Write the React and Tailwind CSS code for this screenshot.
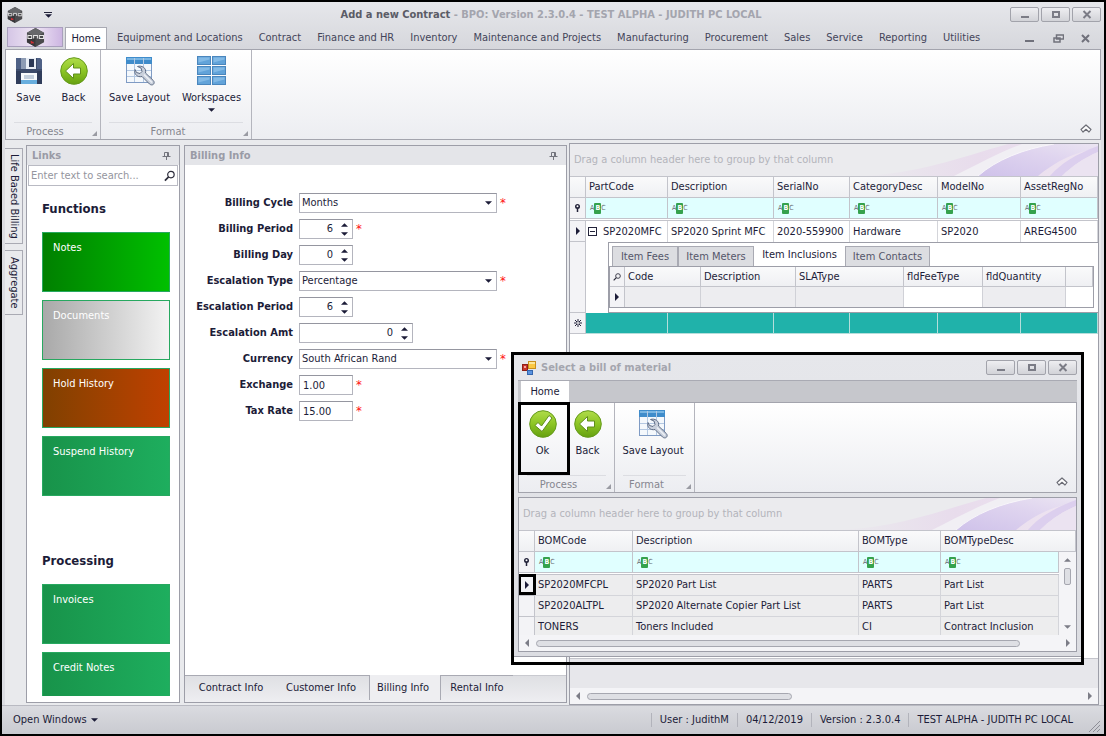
import React, { useState } from 'react';

const MENU = [
  'Equipment and Locations',
  'Contract',
  'Finance and HR',
  'Inventory',
  'Maintenance and Projects',
  'Manufacturing',
  'Procurement',
  'Sales',
  'Service',
  'Reporting',
  'Utilities',
];

const GREEN = 'bg-linear-to-r from-[#18934a] to-[#1eae5e]';

const FUNCTIONS = [
  { label: 'Notes', fill: 'bg-linear-to-r from-[#008000] to-[#00c000]' },
  { label: 'Documents', fill: 'bg-linear-to-r from-[#a9a9a9] to-[#f3f3f3]' },
  { label: 'Hold History', fill: 'bg-linear-to-r from-[#804000] to-[#c04000]' },
  { label: 'Suspend History', fill: GREEN },
];

const PROCESSING = [
  { label: 'Invoices', fill: GREEN },
  { label: 'Credit Notes', fill: GREEN },
];

const FIELDS = [
  { id: 'cycle', label: 'Billing Cycle', type: 'select', value: 'Months', required: true },
  { id: 'period', label: 'Billing Period', type: 'spin', value: '6', required: true },
  { id: 'day', label: 'Billing Day', type: 'spin', value: '0' },
  { id: 'esc-type', label: 'Escalation Type', type: 'select', value: 'Percentage', required: true },
  { id: 'esc-period', label: 'Escalation Period', type: 'spin', value: '6' },
  { id: 'esc-amt', label: 'Escalation Amt', type: 'spin', value: '0', wide: true },
  { id: 'currency', label: 'Currency', type: 'select', value: 'South African Rand', required: true },
  { id: 'exchange', label: 'Exchange', type: 'text', value: '1.00', required: true },
  { id: 'tax', label: 'Tax Rate', type: 'text', value: '15.00', required: true },
];

const ASSET_COLUMNS = ['PartCode', 'Description', 'SerialNo', 'CategoryDesc', 'ModelNo', 'AssetRegNo'];
const BOM_COLUMNS = ['BOMCode', 'Description', 'BOMType', 'BOMTypeDesc'];

const BOM_ROWS = [
  ['SP2020MFCPL', 'SP2020 Part List', 'PARTS', 'Part List'],
  ['SP2020ALTPL', 'SP2020 Alternate Copier Part List', 'PARTS', 'Part List'],
  ['TONERS', 'Toners Included', 'CI', 'Contract Inclusion'],
];

/* ---------- icons ---------- */

const Arrow = ({ dir = 'down', className = '' }) => {
  const paths = {
    down: 'M0 0h8L4 4z',
    up: 'M0 4h8L4 0z',
    left: 'M4 0v8L0 4z',
    right: 'M0 0v8l4-4z',
  };
  const tall = dir === 'left' || dir === 'right';
  return (
    <svg
      width={tall ? 4 : 7}
      height={tall ? 8 : 4}
      viewBox={tall ? '0 0 4 8' : '0 0 8 4'}
      className={`shrink-0 ${className}`}
      fill="currentColor"
      aria-hidden="true"
    >
      <path d={paths[dir]} />
    </svg>
  );
};

const HexLogo = ({ size = 16 }) => (
  <svg width={size} height={size} viewBox="0 0 20 20" aria-hidden="true">
    <path d="M10 0l9 5v10l-9 5-9-5V5z" fill="#4a4a4d" />
    <path d="M10 0l9 5-9 4-9-4z" fill="#66676a" />
    <path d="M10 11v9l-9-5V9z" fill="#38383b" />
    <path d="M1.500 8h4.500v3H2V7M8 11V8h4v3M14 8h4.500v3H14z" fill="none" stroke="#e4e4e4" strokeWidth="1.100" />
    <path d="M5 14l3 2M5 16l3-1" stroke="#d22f35" strokeWidth="1.300" />
  </svg>
);

const SaveIcon = () => (
  <svg width="28" height="28" viewBox="0 0 28 28" aria-hidden="true">
    <path d="M1 1h24l2 2v24H1z" fill="#3c4b6b" />
    <path d="M1 1h5v11H1zM22 1h3l2 2v9h-5z" fill="#4f6186" />
    <rect x="6" y="1" width="15" height="11" fill="#e9eef5" />
    <rect x="6" y="1" width="5" height="11" fill="#8e9cb4" />
    <rect x="14" y="2" width="5" height="8" fill="#2b3855" />
    <rect x="6" y="16" width="16" height="11" fill="#f7fafd" />
    <rect x="6" y="23" width="16" height="4" fill="#68aede" />
    <path d="M9 19h10M9 21h10" stroke="#8ea4be" />
    <path d="M1 14h5v13H1zM22 14h5v13h-5z" fill="#303d5b" />
  </svg>
);

const GreenDisc = ({ id, children }) => (
  <svg width="28" height="28" viewBox="0 0 28 28" aria-hidden="true">
    <defs>
      <linearGradient id={id} x1="0" y1="0" x2="0" y2="1">
        <stop offset="0" stopColor="#b0dc4a" />
        <stop offset="0.5" stopColor="#8cc524" />
        <stop offset="1" stopColor="#66a010" />
      </linearGradient>
    </defs>
    <circle cx="14" cy="14" r="13.3" fill={`url(#${id})`} stroke="#659a1c" strokeWidth="1" />
    {children}
  </svg>
);

const BackIcon = ({ id }) => (
  <GreenDisc id={id}>
    <path d="M5.500 14l8-7.500v4.500h7v6h-7v4.500z" fill="#fff" stroke="#5f8d1c" strokeWidth="1" strokeLinejoin="round" />
  </GreenDisc>
);

const OkIcon = () => (
  <GreenDisc id="disc-ok">
    <path d="M6 15.500l3-3 3.500 3.500L20 5.500l3 2.500-10 13.500z" fill="#fff" stroke="#5f8d1c" strokeWidth="1" strokeLinejoin="round" />
  </GreenDisc>
);

const LayoutIcon = () => (
  <svg width="30" height="30" viewBox="0 0 30 30" aria-hidden="true">
    <rect x="1.500" y="1.500" width="25" height="25" fill="#f4f8fc" stroke="#7f9bc4" />
    <rect x="1" y="1" width="26" height="7" fill="#3f8ccb" />
    <rect x="2" y="2" width="24" height="2" fill="#79b6e3" />
    <path d="M9.500 2v24M18.500 2v24M2 14.500h24M2 20.500h24" stroke="#b4c8e2" />
    <path
      d="M12.500 10.500l3.500 1.500 1 3.500-2 2-3.500-1-1.500-3c-1 3 .5 6 3.500 7 1.500.4 2.500.2 3.500 0l7.500 7.500c1 1 3 1.300 4 .2 1-1 .8-2.700-.2-3.700l-7.800-7.500c.6-2.500-.2-4.500-2-5.700-1.800-1.200-4-1.500-6-.8z"
      fill="#c9d0dc"
      stroke="#5f6d86"
      strokeWidth="1"
      strokeLinejoin="round"
    />
    <path d="M19 18.500l8 8" stroke="#eef1f6" strokeWidth="1.200" />
  </svg>
);

const WorkspacesIcon = () => (
  <svg width="30" height="30" viewBox="0 0 30 30" aria-hidden="true">
    {[0.5, 10.5, 20.5].map((y) =>
      [0.5, 15.5].map((x) => (
        <g key={`${x}-${y}`}>
          <rect x={x} y={y} width="13" height="8" fill="#62a3d9" stroke="#4a86bd" />
          <path d={`M${x + 1} ${y + 1}h11v2l-11 3z`} fill="#83bae6" />
        </g>
      ))
    )}
  </svg>
);

const FormIcon = () => (
  <svg width="14" height="14" viewBox="0 0 14 14" aria-hidden="true">
    <rect x="0.500" y="3.500" width="5" height="6" fill="#c9342a" stroke="#8d1f18" />
    <rect x="2" y="5" width="2" height="2" fill="#f4a79f" />
    <rect x="6.500" y="0.500" width="7" height="7" fill="#fbc843" stroke="#c98f1d" />
    <rect x="7" y="1" width="6" height="2" fill="#fde79b" />
    <rect x="5.500" y="9.500" width="5" height="4" fill="#5b93e0" stroke="#3567ae" />
  </svg>
);

const PinIcon = () => (
  <svg width="9" height="9" viewBox="0 0 9 9" stroke="#73747d" fill="none" aria-hidden="true">
    <path d="M2.500 5V1.500h4V5M5.500 1.500V5M0.500 5.500h8M4.500 5.500V9" />
  </svg>
);

const SearchIcon = ({ size = 12 }) => (
  <svg width={size} height={size} viewBox="0 0 12 12" fill="none" stroke="#2b2b3a" strokeWidth="1.300" aria-hidden="true">
    <circle cx="7.500" cy="4.500" r="3.500" />
    <path d="M5 7L1 11" strokeWidth="1.800" />
  </svg>
);

const FilterMark = () => (
  <svg width="7" height="8" viewBox="0 0 7 8" className="mx-auto" aria-hidden="true">
    <circle cx="3.500" cy="2.500" r="2.500" fill="#23233a" />
    <circle cx="3.500" cy="2.200" r="1" fill="#fff" />
    <path d="M3.500 4v4" stroke="#23233a" strokeWidth="1.500" />
  </svg>
);

const NewRowMark = () => (
  <svg width="8" height="8" viewBox="0 0 8 8" className="mx-auto" stroke="#23233a" aria-hidden="true">
    <path d="M4 0v8M0 4h8M1 1l6 6M7 1L1 7" />
    <circle cx="4" cy="4" r="1" fill="#fff" stroke="none" />
  </svg>
);

const CollapseIcon = () => (
  <svg width="12" height="9" viewBox="0 0 12 9" fill="#fff" stroke="#6c6d76" strokeWidth="1.200" strokeLinejoin="round" aria-hidden="true">
    <path d="M6 1l5 4.500-2 2.500-3-2.700L3 8 1 5.500z" />
  </svg>
);

// Lilac sweep on the right side of every group-by band
const Swoosh = ({ id }) => (
  <svg className="h-full w-[240px]" viewBox="0 0 240 32" preserveAspectRatio="none" aria-hidden="true">
    <defs>
      <linearGradient id={`${id}-a`} x1="0" y1="0" x2="1" y2="0">
        <stop offset="0" stopColor="#ebebee" />
        <stop offset="0.5" stopColor="#e8dcec" />
        <stop offset="1" stopColor="#eee4f1" />
      </linearGradient>
      <linearGradient id={`${id}-b`} x1="0" y1="1" x2="1" y2="0">
        <stop offset="0" stopColor="#cfc2ea" />
        <stop offset="0.6" stopColor="#dfd4ef" />
        <stop offset="1" stopColor="#ebe5f2" />
      </linearGradient>
    </defs>
    <path d="M0 32C60 30 100 14 150 0h90v32H0z" fill={`url(#${id}-a)`} />
    <path d="M96 32C120 20 140 9 164 0h30c-30 8-50 18-72 32z" fill="#f1eff4" />
    <path d="M120 32C138 16 165 5 196 0h44v4C210 10 195 20 180 32z" fill={`url(#${id}-b)`} />
    <path d="M192 32c10-12 26-22 48-30v6c-14 6-26 14-36 24z" fill="#dccfee" />
    <path d="M204 32c10-10 22-18 36-24v24z" fill="#ebe3f1" />
    <path d="M120 32C138 16 165 5 196 0" stroke="#f8f6fa" fill="none" />
  </svg>
);

/* ---------- shared parts ---------- */

const CaptionButton = ({ label, children }) => (
  <button
    type="button"
    aria-label={label}
    className="flex h-[15px] w-[29px] items-center justify-center rounded-xs border border-[#a2a3ab] bg-linear-to-b from-[#eeeef1] to-[#d2d3d8]"
  >
    <svg width="10" height="9" viewBox="0 0 10 9" fill="none" stroke="#7b7c86" strokeWidth="2" aria-hidden="true">
      {children}
    </svg>
  </button>
);

const CaptionButtons = () => (
  <div className="flex gap-[2px]">
    <CaptionButton label="Minimize">
      <path d="M1 7h8" />
    </CaptionButton>
    <CaptionButton label="Maximize">
      <path d="M2 2h6v5H2z" />
    </CaptionButton>
    <CaptionButton label="Close">
      <path d="M1.500 1l7 7M8.500 1l-7 7" />
    </CaptionButton>
  </div>
);

const RibbonButton = ({ icon, label, width, menu, outlined }) => (
  <button type="button" className={`relative flex h-[68px] flex-col items-center pt-1 ${width}`}>
    <span className="flex h-[34px] items-center">{icon}</span>
    <span className="mt-[3px] leading-[14px] whitespace-nowrap">{label}</span>
    {menu && <Arrow className="mt-[3px]" />}
    {outlined && <span className="absolute -top-px -left-px h-[73px] w-[52px] border-3 border-black" />}
  </button>
);

const RibbonGroup = ({ label, width, children }) => (
  <div className={`relative flex flex-col border-r border-[#b4b5bd] ${width}`}>
    <div className="flex">{children}</div>
    <div className="mx-2 mt-[4px] border-t border-[#dcdde2] pt-px pr-4 text-center leading-[16px] text-[#85868f]">{label}</div>
    <svg width="5" height="5" className="absolute right-[3px] bottom-[3px]" aria-hidden="true">
      <path d="M5 0v5H0z" fill="#9a9ba3" />
    </svg>
  </div>
);

const Ribbon = ({ children }) => (
  <div className="flex h-[91px] shrink-0 border border-[#a3a4ad] bg-linear-to-b from-white to-[#ecedf1]">
    {children}
    <button type="button" aria-label="Collapse ribbon" className="mt-auto mr-2 mb-[6px] ml-auto">
      <CollapseIcon />
    </button>
  </div>
);

const GroupBand = ({ id }) => (
  <div className="flex h-8 shrink-0 items-center justify-between bg-[#ebebee] pl-1">
    <span className="whitespace-nowrap text-[#b3b4bb]">Drag a column header here to group by that column</span>
    <Swoosh id={id} />
  </div>
);

const headCell =
  'h-[21px] border-r border-b border-[#c3c4cb] bg-linear-to-b from-[#fafafb] to-[#eff0f3] p-0 pl-[3px] text-left font-normal whitespace-nowrap';
const markCell = 'border-r border-b border-[#c3c4cb] bg-[#f3f3f6] p-0';

const FilterRow = ({ columns }) => (
  <tr className="h-[21px]">
    <td className={markCell}>
      <FilterMark />
    </td>
    {columns.map((c) => (
      <td key={c} className="border-r border-b border-[#c3c4cb] bg-[#e0ffff] p-0 pl-1">
        <button type="button" aria-label={`Filter ${c}`} className="flex h-[11px] items-center text-[7px] leading-[11px] text-[#66676f]">
          A<span className="h-[11px] w-[7px] rounded-[1px] bg-[#35a24d] text-center font-bold text-white">B</span>C
        </button>
      </td>
    ))}
  </tr>
);

const HScroll = ({ thumb }) => (
  <div className="flex h-4 shrink-0 items-center bg-[#f4f4f7] px-[6px] text-[#7c7d87]">
    <Arrow dir="left" className="mr-[7px]" />
    <div className={`h-[7px] rounded-full border border-[#a6a7b0] bg-[#dedfe4] ${thumb}`} />
    <Arrow dir="right" className="ml-auto" />
  </div>
);

const PanelTitle = ({ children }) => (
  <div className="flex h-[19px] shrink-0 items-center justify-between bg-[#e4e5e9] pr-2 pl-[5px]">
    <h2 className="font-bold text-[#9a9ba6]">{children}</h2>
    <button type="button" aria-label={`Pin ${children}`}>
      <PinIcon />
    </button>
  </div>
);

/* ---------- left panels ---------- */

const Tiles = ({ items }) => (
  <div className="flex flex-col gap-2">
    {items.map((t) => (
      <button
        key={t.label}
        type="button"
        className={`flex h-[60px] shrink-0 items-start border border-[#27a860] px-[10px] pt-2 leading-[14px] text-white ${t.fill}`}
      >
        {t.label}
      </button>
    ))}
  </div>
);

const LinksPanel = () => (
  <section className="flex w-[154px] shrink-0 flex-col border border-[#9d9ea8] bg-white">
    <PanelTitle>Links</PanelTitle>
    <div className="mx-px flex h-[21px] shrink-0 items-center border border-[#b9bac3] px-[2px]">
      <input
        type="text"
        aria-label="Search links"
        placeholder="Enter text to search..."
        className="w-full min-w-0 outline-none placeholder:text-[#94959e]"
      />
      <SearchIcon />
    </div>
    <div className="mb-[6px] min-h-0 flex-1 overflow-hidden px-[15px] pr-[9px]">
      <h3 className="mt-[15px] mb-[15px] text-[13px] leading-[16px] font-bold">Functions</h3>
      <Tiles items={FUNCTIONS} />
      <h3 className="mt-[57px] mb-[15px] text-[13px] leading-[16px] font-bold">Processing</h3>
      <Tiles items={PROCESSING} />
    </div>
  </section>
);

const box = 'h-5 border border-[#b4b5be] border-t-[#9596a0] bg-white';

const Field = ({ field }) => {
  const [value, setValue] = useState(field.value);
  const id = `field-${field.id}`;
  const step = (n) => setValue(String(Number(value) + n));

  return (
    <div className="flex h-5 items-center">
      <label htmlFor={id} className="mr-[6px] w-[108px] shrink-0 text-right font-bold whitespace-nowrap">
        {field.label}
      </label>
      {field.type === 'select' && (
        <div className="relative">
          <select id={id} className={`${box} w-[198px] appearance-none pl-[2px]`}>
            <option>{field.value}</option>
          </select>
          <Arrow className="pointer-events-none absolute top-2 right-[5px]" />
        </div>
      )}
      {field.type === 'spin' && (
        <div className={`${box} flex ${field.wide ? 'w-[114px]' : 'w-[54px]'}`}>
          <input
            id={id}
            type="text"
            value={value}
            onChange={(e) => setValue(e.target.value)}
            className="w-full min-w-0 pr-[3px] text-right outline-none"
          />
          <div className="flex w-4 shrink-0 flex-col items-center justify-center gap-[5px]">
            <button type="button" aria-label={`Increase ${field.label}`} onClick={() => step(1)}>
              <Arrow dir="up" />
            </button>
            <button type="button" aria-label={`Decrease ${field.label}`} onClick={() => step(-1)}>
              <Arrow />
            </button>
          </div>
        </div>
      )}
      {field.type === 'text' && (
        <input
          id={id}
          type="text"
          value={value}
          onChange={(e) => setValue(e.target.value)}
          className={`${box} w-[54px] pl-[3px] outline-none`}
        />
      )}
      {field.required && <span className="ml-[3px] text-[13px] leading-[14px] text-[#ff1010]">*</span>}
    </div>
  );
};

const BillingPanel = () => (
  <section className="flex w-[383px] shrink-0 flex-col border border-[#9d9ea8] bg-white">
    <PanelTitle>Billing Info</PanelTitle>
    <form className="flex flex-1 flex-col gap-[6px] pt-7">
      {FIELDS.map((f) => (
        <Field key={f.id} field={f} />
      ))}
    </form>
    <nav className="flex h-[27px] shrink-0 bg-linear-to-b from-[#dedfe3] to-[#eeeef1] pb-[2px]">
      <button type="button" className="w-[92px] border-t border-[#a9aab3]">Contract Info</button>
      <button type="button" className="w-[93px] border-t border-r border-[#a9aab3] pr-1">Customer Info</button>
      <button type="button" className="w-[71px] border-r border-[#a9aab3] bg-[#eeeef1] pr-1">Billing Info</button>
      <button type="button" className="w-[72px] border-t border-[#a9aab3]">Rental Info</button>
      <span className="flex-1 border-t border-[#c9cad0]" />
    </nav>
  </section>
);

/* ---------- asset grid ---------- */

const detailTab = 'h-5 border border-b-0 border-[#a9aab3] bg-[#dcdde1] text-[#55566a] whitespace-nowrap';

const ItemDetail = () => (
  <div className="border-t border-b border-l border-[#9d9ea8] bg-white pb-1">
    <div className="flex items-end pl-[3px]">
      <button type="button" className={`${detailTab} w-[66px]`}>Item Fees</button>
      <button type="button" className={`${detailTab} w-[76px]`}>Item Meters</button>
      <button type="button" className="h-[23px] w-[91px] bg-white whitespace-nowrap">Item Inclusions</button>
      <button type="button" className={`${detailTab} w-[85px]`}>Item Contacts</button>
    </div>
    <table className="mr-1 w-[485px] table-fixed border-separate border-spacing-0 border border-[#9d9ea8]">
      <colgroup>
        <col className="w-[15px]" />
        <col className="w-[76px]" />
        <col className="w-[95px]" />
        <col className="w-[108px]" />
        <col className="w-[79px]" />
        <col className="w-[83px]" />
        <col />
      </colgroup>
      <thead>
        <tr className="h-5">
          <th className="border-r border-b border-[#c3c4cb] bg-[#f3f3f6] p-0" aria-label="Find">
            <span className="flex justify-center">
              <SearchIcon size={8} />
            </span>
          </th>
          {['Code', 'Description', 'SLAType', 'fldFeeType', 'fldQuantity', ''].map((c) => (
            <th
              key={c}
              className="border-r border-b border-[#c3c4cb] bg-linear-to-b from-[#fafafb] to-[#eff0f3] p-0 pl-[3px] text-left font-normal"
            >
              {c}
            </th>
          ))}
        </tr>
      </thead>
      <tbody>
        <tr className="h-5">
          <td className="border-r border-[#c3c4cb] bg-[#f3f3f6] p-0">
            <Arrow dir="right" className="mx-auto" />
          </td>
          <td className="border-r border-[#d0d1d7] bg-[#ededf0]" />
          <td className="border-r border-[#d0d1d7] bg-[#ededf0]" />
          <td className="border-r border-[#d0d1d7] bg-[#ededf0]" />
          <td className="border-r border-[#d0d1d7] bg-white" />
          <td className="border-r border-[#d0d1d7] bg-[#ededf0]" />
          <td className="bg-white" />
        </tr>
      </tbody>
    </table>
  </div>
);

const dataCell = 'border-r border-[#d4d5da] p-0 pl-[3px] whitespace-nowrap';

const AssetGrid = () => (
  <section className="mr-[2px] flex min-w-0 flex-1 flex-col overflow-hidden border border-[#9d9ea8] bg-white">
    <GroupBand id="band-assets" />
    <table className="w-full table-fixed border-separate border-spacing-0 border-t border-[#c3c4cb]">
      <colgroup>
        <col className="w-4" />
        <col className="w-[82px]" />
        <col className="w-[106px]" />
        <col className="w-[76px]" />
        <col className="w-[88px]" />
        <col className="w-[83px]" />
        <col />
      </colgroup>
      <thead>
        <tr>
          <th className={headCell} aria-label="Row" />
          {ASSET_COLUMNS.map((c) => (
            <th key={c} className={headCell}>{c}</th>
          ))}
        </tr>
      </thead>
      <tbody>
        <FilterRow columns={ASSET_COLUMNS} />
        <tr className="h-[2px]">
          <td colSpan={7} className="border-b border-[#c3c4cb] p-0" />
        </tr>
        <tr className="h-[21px]">
          <td className={markCell}>
            <Arrow dir="right" className="mx-auto" />
          </td>
          <td className="border-r border-[#d4d5da] p-0">
            <span className="flex items-center gap-[6px] pl-[2px]">
              <button
                type="button"
                aria-label="Collapse row"
                className="flex size-[9px] shrink-0 items-center justify-center border border-[#23233a]"
              >
                <span className="h-px w-[5px] bg-[#23233a]" />
              </button>
              SP2020MFC
            </span>
          </td>
          <td className={dataCell}>SP2020 Sprint MFC</td>
          <td className={dataCell}>2020-559900</td>
          <td className={dataCell}>Hardware</td>
          <td className={dataCell}>SP2020</td>
          <td className={dataCell}>AREG4500</td>
        </tr>
        <tr>
          <td className={markCell} />
          <td colSpan={6} className="p-0 pl-[22px]">
            <ItemDetail />
          </td>
        </tr>
        <tr className="h-[21px]">
          <td className={markCell}>
            <NewRowMark />
          </td>
          {ASSET_COLUMNS.map((c) => (
            <td key={c} className="border-r border-b border-[#b5dedb] bg-[#20b2aa] p-0" />
          ))}
        </tr>
      </tbody>
    </table>
    <div className="flex-1" />
    <div className="h-[30px] shrink-0 border-t border-[#c3c4cb] bg-[#e7e7eb]" />
    <HScroll thumb="w-[205px]" />
  </section>
);

/* ---------- dialog ---------- */

const BomGrid = () => (
  <section className="flex min-h-0 flex-1 flex-col overflow-hidden border border-[#9d9ea8] bg-[#f4f4f7]">
    <GroupBand id="band-bom" />
    <div className="relative min-h-0 flex-1 overflow-hidden">
      <table className="w-full table-fixed border-separate border-spacing-0 border-t border-[#c3c4cb]">
        <colgroup>
          <col className="w-4" />
          <col className="w-[98px]" />
          <col className="w-[226px]" />
          <col className="w-[82px]" />
          <col />
          <col className="w-[17px]" />
        </colgroup>
        <thead>
          <tr>
            <th className={headCell} aria-label="Row" />
            {BOM_COLUMNS.map((c, i) => (
              <th key={c} colSpan={i === 3 ? 2 : 1} className={headCell}>{c}</th>
            ))}
          </tr>
        </thead>
        <tbody>
          <FilterRow columns={BOM_COLUMNS} />
          <tr className="h-[2px]">
            <td colSpan={5} className="border-b border-[#c3c4cb] bg-white p-0" />
          </tr>
          {BOM_ROWS.map((row, r) => (
            <tr key={row[0]} className="h-[21px]">
              <td className={`${markCell} relative`}>
                {r === 0 && (
                  <>
                    <Arrow dir="right" className="mx-auto" />
                    <span className="absolute -top-px -left-px h-[21px] w-[18px] border-3 border-black" />
                  </>
                )}
              </td>
              {row.map((cell, i) => (
                <td key={i} className="border-r border-b border-[#d4d5da] bg-[#ededee] p-0 pl-[3px] whitespace-nowrap">
                  {cell}
                </td>
              ))}
            </tr>
          ))}
        </tbody>
      </table>
      <div className="absolute top-[22px] right-0 bottom-0 flex w-[17px] flex-col items-center bg-[#f4f4f7] py-[6px] text-[#7c7d87]">
        <Arrow dir="up" />
        <div className="mt-[6px] h-[17px] w-[7px] rounded-xs border border-[#a6a7b0] bg-[#dedfe4]" />
        <Arrow className="mt-auto" />
      </div>
    </div>
    <HScroll thumb="w-[484px]" />
  </section>
);

const BomDialog = () => (
  <div role="dialog" aria-label="Select a bill of material" className="absolute top-[350px] left-[509px] h-[313px] w-[573px] border-3 border-black">
    <div className="flex h-[302px] flex-col border-b border-[#9d9ea8] bg-linear-to-b from-[#e6e7eb] to-[#dcdde2] px-1 pb-1">
      <div className="flex h-[25px] shrink-0 items-center gap-[5px] pl-1">
        <FormIcon />
        <h2 className="flex-1 font-bold text-[#a4a5ae]">Select a bill of material</h2>
        <CaptionButtons />
      </div>
      <div className="flex h-[22px] shrink-0 items-end border-t border-[#a9aab3] bg-[#c6c7cc] pl-[3px]">
        <button type="button" className="h-[21px] w-[48px] bg-white">Home</button>
      </div>
      <Ribbon>
        <RibbonGroup label="Process" width="w-[96px]">
          <RibbonButton icon={<OkIcon />} label="Ok" width="w-[47px]" outlined />
          <RibbonButton icon={<BackIcon id="disc-back-bom" />} label="Back" width="w-[43px]" />
        </RibbonGroup>
        <RibbonGroup label="Format" width="w-[80px]">
          <RibbonButton icon={<LayoutIcon />} label="Save Layout" width="w-[76px]" />
        </RibbonGroup>
      </Ribbon>
      <div className="h-1 shrink-0" />
      <BomGrid />
    </div>
  </div>
);

/* ---------- page ---------- */

const SideTab = ({ children, height }) => (
  <button
    type="button"
    className={`flex w-[18px] items-center justify-center border border-l-0 border-[#a9aab3] bg-[#e9eaed] whitespace-nowrap [writing-mode:vertical-rl] ${height}`}
  >
    {children}
  </button>
);

const App = () => (
  <div className="relative flex h-screen min-h-[700px] flex-col overflow-hidden border-2 border-black bg-[#dcdde2] font-['DejaVu_Sans_Condensed','Noto_Sans',sans-serif] text-[11px] leading-[14px] text-[#1c1c38]">
    <header className="shrink-0 bg-linear-to-b from-[#e6e7eb] to-[#d6d7dc] px-[3px]">
      <div className="flex h-[25px] items-center pl-[2px]">
        <HexLogo />
        <button type="button" aria-label="Customize toolbar" className="ml-[21px] flex flex-col items-center gap-px">
          <span className="h-px w-2 bg-[#23233a]" />
          <Arrow />
        </button>
        <h1 className="flex-1 pl-10 text-center font-bold whitespace-nowrap text-[#a4a5ae]">
          <span className="text-[#5b5c66]">Add a new Contract</span> - BPO: Version 2.3.0.4 - TEST ALPHA - JUDITH PC LOCAL
        </h1>
        <CaptionButtons />
      </div>
      <nav className="flex h-[22px] items-stretch pl-[2px] text-[#44455a]">
        <button
          type="button"
          aria-label="Application menu"
          className="mb-[2px] flex w-[56px] items-center justify-center border border-[#a9a0bd] bg-linear-to-r from-[#d5c6e6] via-[#efe6f4] to-[#cdb6e2]"
        >
          <HexLogo size={19} />
        </button>
        <button type="button" className="ml-[2px] w-[42px] border border-b-0 border-[#a9aab3] bg-white text-[#1c1c38]">
          Home
        </button>
        <div className="ml-[10px] flex gap-4">
          {MENU.map((m) => (
            <button key={m} type="button" className="whitespace-nowrap">{m}</button>
          ))}
        </div>
        <div className="mr-[9px] ml-auto flex items-center gap-[17px]">
          {['M0 7h9', 'M3.500 1h7v4h-7zM1 4h6v4H1z', 'M1 1l7 7M8 1L1 8'].map((d, i) => (
            <button key={d} type="button" aria-label={['Minimize', 'Restore', 'Close'][i]}>
              <svg width="11" height="9" fill={i === 1 ? '#dcdde2' : 'none'} stroke="#70717b" strokeWidth={i === 1 ? 1.5 : 2} aria-hidden="true">
                <path d={d} />
              </svg>
            </button>
          ))}
        </div>
      </nav>
    </header>

    <div className="flex min-h-0 flex-1 flex-col px-[3px]">
      <Ribbon>
        <RibbonGroup label="Process" width="w-[95px]">
          <RibbonButton icon={<SaveIcon />} label="Save" width="w-[45px]" />
          <RibbonButton icon={<BackIcon id="disc-back" />} label="Back" width="w-[45px]" />
        </RibbonGroup>
        <RibbonGroup label="Format" width="w-[151px]">
          <RibbonButton icon={<LayoutIcon />} label="Save Layout" width="w-[77px]" />
          <RibbonButton icon={<WorkspacesIcon />} label="Workspaces" width="w-[67px]" menu />
        </RibbonGroup>
      </Ribbon>

      <main className="flex min-h-0 flex-1 bg-[#e9eaed] pt-[3px]">
        <div className="mr-[3px] flex flex-col gap-[6px] pt-[5px]">
          <SideTab height="h-[96px]">Life Based Billing</SideTab>
          <SideTab height="h-[65px]">Aggregate</SideTab>
        </div>
        <div className="mr-[2px] flex gap-1 pt-[2px] pb-[2px]">
          <LinksPanel />
          <BillingPanel />
        </div>
        <AssetGrid />
      </main>
    </div>

    <footer className="flex h-[29px] shrink-0 items-center border-t border-[#b9bac2] bg-linear-to-b from-[#dadbe0] to-[#c9cad0] pl-[11px]">
      <button type="button" className="flex items-center gap-1">
        Open Windows
        <Arrow />
      </button>
      <div className="ml-auto flex [&>span]:border-l [&>span]:border-[#b2b3bb] [&>span]:px-2">
        <span>User : JudithM</span>
        <span>04/12/2019</span>
        <span>Version : 2.3.0.4</span>
        <span>TEST ALPHA - JUDITH PC LOCAL</span>
      </div>
      <svg width="11" height="11" className="mt-3 mr-1 ml-2" stroke="#8d8e97" aria-hidden="true">
        <path d="M0 11L11 0M4 11l7-7M8 11l3-3" />
      </svg>
    </footer>

    <BomDialog />
  </div>
);

export default App;
